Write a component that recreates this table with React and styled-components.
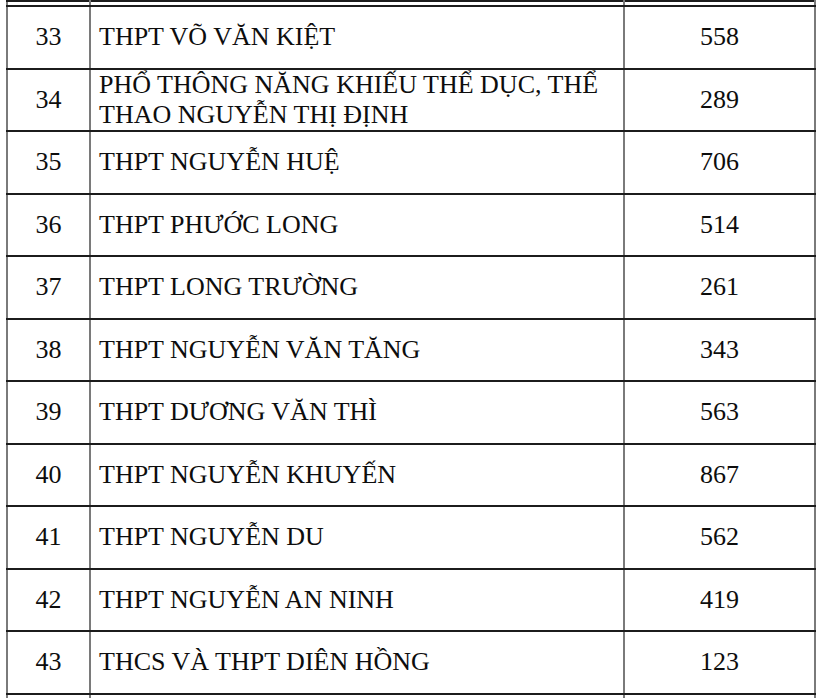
import React from 'react';
import styled, { createGlobalStyle } from 'styled-components';

const GlobalStyle = createGlobalStyle`
  html, body {
    margin: 0;
    padding: 0;
    background: #ffffff;
  }
  body {
    width: 820px;
    height: 698px;
    overflow: hidden;
  }
`;

const Page = styled.div`
  width: 820px;
  height: 698px;
  overflow: hidden;
  background: #ffffff;
  padding-left: 6px;
  box-sizing: border-box;
`;

const Table = styled.table`
  border-collapse: collapse;
  table-layout: fixed;
  width: 808px;
  font-family: "Liberation Serif", "Times New Roman", serif;
  font-size: 26px;
  color: #0d0d0d;
`;

const Row = styled.tr`
  height: ${(p) => p.$h || 62.5}px;
`;

const Cell = styled.td`
  border-top: 2px solid #1c1c1c;
  border-bottom: 2px solid #1c1c1c;
  border-left: 2px solid #7a7a7a;
  border-right: 2px solid #7a7a7a;
  padding: ${(p) => (p.$name ? '0 8px 0 8px' : '0')};
  text-align: ${(p) => (p.$name ? 'left' : 'center')};
  vertical-align: middle;
  line-height: 30px;
`;

const rows = [
  { no: 33, name: 'THPT VÕ VĂN KIỆT', count: 558 },
  { no: 34, name: 'PHỔ THÔNG NĂNG KHIẾU THỂ DỤC, THỂ THAO NGUYỄN THỊ ĐỊNH', count: 289 },
  { no: 35, name: 'THPT NGUYỄN HUỆ', count: 706 },
  { no: 36, name: 'THPT PHƯỚC LONG', count: 514 },
  { no: 37, name: 'THPT LONG TRƯỜNG', count: 261 },
  { no: 38, name: 'THPT NGUYỄN VĂN TĂNG', count: 343 },
  { no: 39, name: 'THPT DƯƠNG VĂN THÌ', count: 563 },
  { no: 40, name: 'THPT NGUYỄN KHUYẾN', count: 867 },
  { no: 41, name: 'THPT NGUYỄN DU', count: 562 },
  { no: 42, name: 'THPT NGUYỄN AN NINH', count: 419 },
  { no: 43, name: 'THCS VÀ THPT DIÊN HỒNG', count: 123 },
];

const App = () => {
  return (
    <Page>
      <GlobalStyle />
      <Table>
        <colgroup>
          <col style={{ width: 83 }} />
          <col style={{ width: 534 }} />
          <col style={{ width: 191 }} />
        </colgroup>
        <tbody>
          <Row $h={5}>
            <Cell />
            <Cell $name />
            <Cell />
          </Row>
          {rows.map((r) => (
            <Row key={r.no}>
              <Cell>{r.no}</Cell>
              <Cell $name>{r.name}</Cell>
              <Cell>{r.count}</Cell>
            </Row>
          ))}
          <Row>
            <Cell />
            <Cell $name />
            <Cell />
          </Row>
        </tbody>
      </Table>
    </Page>
  );
};

export default App;
